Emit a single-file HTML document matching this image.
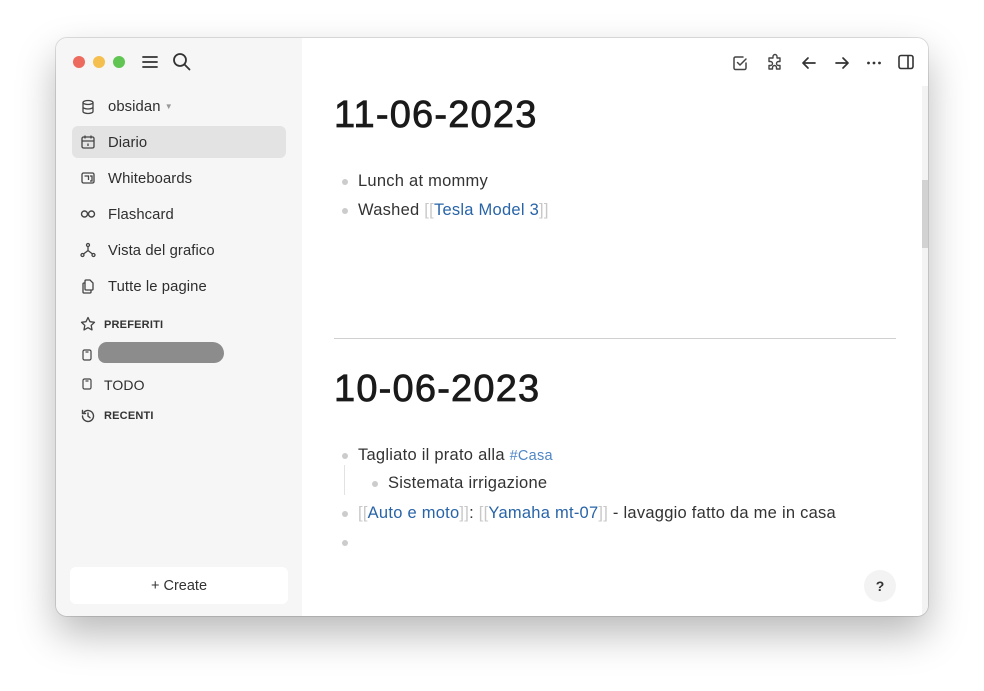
<!DOCTYPE html>
<html><head><meta charset="utf-8"><style>
*{box-sizing:border-box;margin:0;padding:0}
body{width:984px;height:691px;background:#fff;font-family:"Liberation Sans",sans-serif;position:relative;overflow:hidden}
.win{position:absolute;left:56px;top:38px;width:872px;height:578px;border-radius:11px;overflow:hidden;background:#fff;box-shadow:0 0 0 1px rgba(0,0,0,.12),0 18px 40px rgba(0,0,0,.28)}
.side{position:absolute;left:0;top:0;width:246px;height:100%;background:#f6f6f6}
.a{position:absolute}
.dot{position:absolute;top:18px;width:12px;height:12px;border-radius:50%}
.it{position:absolute;left:52px;font-size:14.8px;color:#2e2e2e;letter-spacing:.1px}
.ic{position:absolute;left:24px}
.sec{position:absolute;left:48px;font-size:11px;font-weight:bold;color:#333;letter-spacing:.2px}
.main{position:absolute;left:246px;top:0;right:0;height:100%;background:#fff}
h1{position:absolute;left:32px;font-size:38px;font-weight:normal;color:#1a1a1a;letter-spacing:1.2px;-webkit-text-stroke:.8px #1a1a1a}
.li{position:absolute;font-size:16.5px;color:#333;white-space:nowrap;letter-spacing:.25px}
.b{position:absolute;width:6px;height:6px;border-radius:50%;background:#ccc}
.lk{color:#2864a8}.br{color:#c8c8c8}.tg{color:#4f86c6;font-size:14.5px}
svg{display:block}
</style></head><body>
<div class="win">
 <div class="side">
  <div class="dot" style="left:17px;background:#ed6a5e"></div>
  <div class="dot" style="left:37px;background:#f5bf4f"></div>
  <div class="dot" style="left:57px;background:#61c554"></div>
  <svg class="a" style="left:85px;top:16px" width="18" height="16" viewBox="0 0 18 16"><path d="M2 3h14M2 8h14M2 13h14" stroke="#333" stroke-width="1.8" stroke-linecap="round"/></svg>
  <svg class="a" style="left:116px;top:14px" width="20" height="20" viewBox="0 0 20 20"><circle cx="8" cy="8" r="6" fill="none" stroke="#333" stroke-width="1.8"/><path d="M12.5 12.5l5 5" stroke="#333" stroke-width="1.8" stroke-linecap="round"/></svg>

  <svg class="ic" style="top:61px" width="16" height="16" viewBox="0 0 16 16" fill="none" stroke="#444" stroke-width="1.3"><ellipse cx="8" cy="3.5" rx="5" ry="2"/><path d="M3 3.5v9c0 1.1 2.2 2 5 2s5-.9 5-2v-9M3 8c0 1.1 2.2 2 5 2s5-.9 5-2"/></svg>
  <div class="it" style="top:61px">obsidan <span style="color:#999;font-size:8px;vertical-align:2px">&#9660;</span></div>

  <div class="a" style="left:16px;top:88px;width:214px;height:32px;border-radius:6px;background:#e3e3e3"></div>
  <svg class="ic" style="top:96px" width="16" height="16" viewBox="0 0 16 16" fill="none" stroke="#444" stroke-width="1.3"><rect x="2" y="3" width="12" height="11" rx="1.5"/><path d="M2 7h12M5 1.5v3M11 1.5v3M8 9.5v2.5"/></svg>
  <div class="it" style="top:97px">Diario</div>

  <svg class="ic" style="top:132px" width="16" height="16" viewBox="0 0 16 16" fill="none" stroke="#444" stroke-width="1.3"><rect x="2" y="3" width="12" height="10" rx="1.5"/><path d="M4.5 6h4v4M10 6h2v5h-2"/></svg>
  <div class="it" style="top:133px">Whiteboards</div>

  <svg class="ic" style="top:168px" width="16" height="16" viewBox="0 0 16 16" fill="none" stroke="#444" stroke-width="1.4"><circle cx="4.5" cy="8" r="3"/><circle cx="11.5" cy="8" r="3"/></svg>
  <div class="it" style="top:169px">Flashcard</div>

  <svg class="ic" style="top:204px" width="16" height="16" viewBox="0 0 16 16" fill="none" stroke="#444" stroke-width="1.3"><circle cx="8" cy="3" r="1.5"/><circle cx="2.5" cy="13" r="1.5"/><circle cx="13.5" cy="13" r="1.5"/><path d="M8 4.5v4L3.5 12M8 8.5l4.5 3.5"/></svg>
  <div class="it" style="top:205px">Vista del grafico</div>

  <svg class="ic" style="top:240px" width="16" height="16" viewBox="0 0 16 16" fill="none" stroke="#444" stroke-width="1.3"><path d="M6 2h4l3 3v6a1 1 0 0 1-1 1H6a1 1 0 0 1-1-1V3a1 1 0 0 1 1-1z"/><path d="M5 5H4a1 1 0 0 0-1 1v8a1 1 0 0 0 1 1h6a1 1 0 0 0 1-1v-2"/></svg>
  <div class="it" style="top:241px">Tutte le pagine</div>

  <svg class="ic" style="top:278px" width="16" height="16" viewBox="0 0 16 16" fill="none" stroke="#444" stroke-width="1.3" stroke-linejoin="round"><path d="M8 1.5l2 4.2 4.5.6-3.3 3.1.8 4.5L8 11.7 4 13.9l.8-4.5L1.5 6.3 6 5.7z"/></svg>
  <div class="sec" style="top:281px">PREFERITI</div>

  <svg class="ic" style="left:26px;top:311px" width="10" height="12" viewBox="0 0 10 12" fill="none" stroke="#444" stroke-width="1.2"><rect x="1" y="1" width="8" height="10" rx="1.5"/><path d="M3.5 3h3"/></svg>
  <div class="a" style="left:42px;top:304px;width:126px;height:21px;border-radius:11px 14px 12px 9px;background:#8c8c8c"></div>

  <svg class="ic" style="left:26px;top:340px" width="10" height="12" viewBox="0 0 10 12" fill="none" stroke="#444" stroke-width="1.2"><rect x="1" y="1" width="8" height="10" rx="1.5"/><path d="M3.5 3h3"/></svg>
  <div class="it" style="left:48px;top:339px;font-size:14px">TODO</div>

  <svg class="ic" style="top:370px" width="16" height="16" viewBox="0 0 16 16" fill="none" stroke="#444" stroke-width="1.4" stroke-linecap="round"><path d="M2.5 8a5.5 5.5 0 1 0 1.6-3.9M2.5 2.5v3h3M8 5v3.2l2 1.5"/></svg>
  <div class="sec" style="top:372px">RECENTI</div>

  <div class="a" style="left:14px;top:529px;width:218px;height:37px;border-radius:6px;background:#fff;font-size:14.5px;color:#333;text-align:center;line-height:38px">+ Create</div>
 </div>

 <div class="main">
  <svg class="a" style="left:429px;top:16px" width="18" height="18" viewBox="0 0 18 18" fill="none" stroke="#444" stroke-width="1.5" stroke-linecap="round" stroke-linejoin="round"><path d="M15 9v5a1.5 1.5 0 0 1-1.5 1.5h-9A1.5 1.5 0 0 1 3 14V4.5A1.5 1.5 0 0 1 4.5 3H12"/><path d="M6.5 8.5l2.5 2.5 6-6"/></svg>
  <svg class="a" style="left:463px;top:15px" width="20" height="20" viewBox="0 0 20 20" fill="none" stroke="#444" stroke-width="1.4" stroke-linejoin="round"><path d="M8 3.5a2 2 0 0 1 4 0V5h3v3.5h-1.5a2 2 0 0 0 0 4H15V16h-3.5v-1.5a2 2 0 0 0-4 0V16H4v-3.5h1.5a2 2 0 0 0 0-4H4V5h4z"/></svg>
  <svg class="a" style="left:498px;top:16px" width="18" height="18" viewBox="0 0 18 18" fill="none" stroke="#333" stroke-width="1.7" stroke-linecap="round" stroke-linejoin="round"><path d="M15 9H3M8 4L3 9l5 5"/></svg>
  <svg class="a" style="left:531px;top:16px" width="18" height="18" viewBox="0 0 18 18" fill="none" stroke="#333" stroke-width="1.7" stroke-linecap="round" stroke-linejoin="round"><path d="M3 9h12M10 4l5 5-5 5"/></svg>
  <svg class="a" style="left:563px;top:16px" width="18" height="18" viewBox="0 0 18 18" fill="#333"><circle cx="3.5" cy="9" r="1.4"/><circle cx="9" cy="9" r="1.4"/><circle cx="14.5" cy="9" r="1.4"/></svg>
  <svg class="a" style="left:595px;top:15px" width="18" height="18" viewBox="0 0 18 18" fill="none" stroke="#333" stroke-width="1.6"><rect x="2" y="2.5" width="14" height="13" rx="2"/><path d="M11 2.5v13"/></svg>

  <div class="a" style="left:620px;top:48px;width:6px;height:530px;background:#f3f3f3"></div>
  <div class="a" style="left:620px;top:142px;width:6px;height:68px;background:#d2d2d2"></div>

  <h1 style="top:56px">11-06-2023</h1>
  <div class="b" style="left:40px;top:141px"></div>
  <div class="li" style="left:56px;top:134px">Lunch at mommy</div>
  <div class="b" style="left:40px;top:170px"></div>
  <div class="li" style="left:56px;top:163px">Washed <span class="br">[[</span><span class="lk">Tesla Model 3</span><span class="br">]]</span></div>

  <div class="a" style="left:32px;top:300px;width:562px;height:1px;background:#d0d0d0"></div>

  <h1 style="top:330px">10-06-2023</h1>
  <div class="b" style="left:40px;top:415px"></div>
  <div class="li" style="left:56px;top:408px">Tagliato il prato alla <span class="tg">#Casa</span></div>
  <div class="a" style="left:42px;top:427px;width:1px;height:30px;background:#e2e2e2"></div>
  <div class="b" style="left:70px;top:443px"></div>
  <div class="li" style="left:86px;top:436px">Sistemata irrigazione</div>
  <div class="b" style="left:40px;top:473px"></div>
  <div class="li" style="left:56px;top:466px"><span class="br">[[</span><span class="lk">Auto e moto</span><span class="br">]]</span>: <span class="br">[[</span><span class="lk">Yamaha mt-07</span><span class="br">]]</span> - lavaggio fatto da me in casa</div>
  <div class="b" style="left:40px;top:502px"></div>

  <div class="a" style="left:562px;top:532px;width:32px;height:32px;border-radius:50%;background:#f3f3f3;text-align:center;line-height:32px;font-size:14px;font-weight:bold;color:#333">?</div>
 </div>
</div>
</body></html>
